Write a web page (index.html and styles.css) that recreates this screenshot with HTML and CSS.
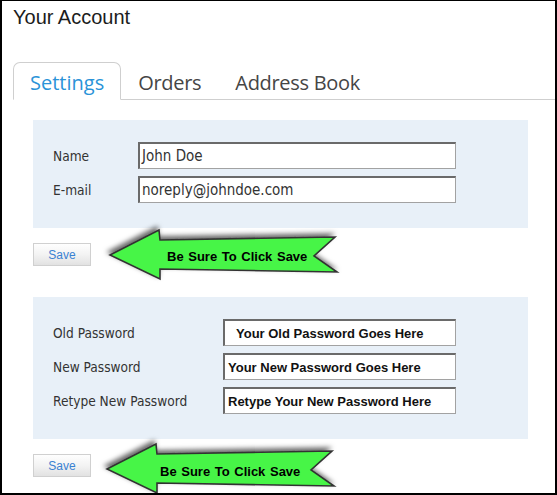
FILE: index.html
```html
<!DOCTYPE html>
<html lang="en">
<head>
<meta charset="utf-8">
<title>Your Account</title>
<link rel="stylesheet" href="styles.css">
</head>
<body>
<div class="frame">
  <h1 class="title">Your Account</h1>
  <div class="tabs">
    <div class="tab active">Settings</div>
    <div class="tab">Orders</div>
    <div class="tab">Address Book</div>
  </div>

  <div class="panel panel-info">
    <div class="label">Name</div>
    <div class="field">John Doe</div>
    <div class="label">E-mail</div>
    <div class="field">noreply@johndoe.com</div>
  </div>
  <div class="save-row">
    <button class="btn">Save</button>
    <svg class="callout" viewBox="100 224 245 60" width="245" height="60">
      <defs>
        <filter id="sh1" x="-10%" y="-40%" width="125%" height="180%">
          <feDropShadow dx="-2" dy="-3" stdDeviation="2.5" flood-color="#000" flood-opacity="0.6"/>
        </filter>
      </defs>
      <polygon points="110,255 159,230 160,240 335,237 314,256 337,272 160,269 160,279" fill="#46f546" stroke="#333" stroke-width="1.6" stroke-linejoin="miter" filter="url(#sh1)"/>
      <text x="167" y="261" class="callout-text">Be Sure To Click Save</text>
    </svg>
  </div>

  <div class="panel panel-pass">
    <div class="label">Old Password</div>
    <div class="field bold indent">Your Old Password Goes Here</div>
    <div class="label">New Password</div>
    <div class="field bold">Your New Password Goes Here</div>
    <div class="label">Retype New Password</div>
    <div class="field bold">Retype Your New Password Here</div>
  </div>
  <div class="save-row">
    <button class="btn">Save</button>
    <svg class="callout callout-2" viewBox="100 224 245 60" width="245" height="60">
      <defs>
        <filter id="sh2" x="-10%" y="-40%" width="125%" height="180%">
          <feDropShadow dx="-2" dy="-3" stdDeviation="2.5" flood-color="#000" flood-opacity="0.6"/>
        </filter>
      </defs>
      <polygon points="110,255 159,230 160,240 335,237 314,256 337,272 160,269 160,279" fill="#46f546" stroke="#333" stroke-width="1.6" stroke-linejoin="miter" filter="url(#sh2)"/>
      <text x="163" y="262" class="callout-text">Be Sure To Click Save</text>
    </svg>
  </div>
</div>
</body>
</html>
```
FILE: styles.css
```css
html, body {
  margin: 0;
  padding: 0;
  background: #fff;
}

.frame {
  width: 557px;
  height: 495px;
  box-sizing: border-box;
  border: 2px solid #000;
  border-top-width: 1px;
  overflow: hidden;
  background: #fff;
}

.title {
  margin: 0 0 0 11px;
  padding-top: 4px;
  font-family: "Liberation Sans", Arial, sans-serif;
  font-weight: normal;
  font-size: 20px;
  line-height: 24px;
  color: #1c1c1c;
}

.tabs {
  display: flex;
  align-items: flex-end;
  margin: 33px 0 0 11px;
  border-bottom: 1px solid #cfcfcf;
}

.tab {
  padding: 6px 16px 3px;
  font-family: "Open Sans", "Noto Sans", sans-serif;
  font-size: 20px;
  line-height: 27px;
  color: #454545;
  letter-spacing: -0.3px;
  border: 1px solid transparent;
  border-radius: 7px 7px 0 0;
  margin-bottom: -1px;
}

.tab.active {
  color: #2a93d8;
  letter-spacing: 0;
  border-color: #cfcfcf;
  border-bottom-color: #fff;
  background: #fff;
}

.panel {
  display: grid;
  align-items: center;
  row-gap: 7px;
  width: 495px;
  box-sizing: border-box;
  margin-left: 31px;
  padding: 22px 0 25px 20px;
  background: #e8f0f8;
}

.panel-info {
  margin-top: 20px;
  grid-template-columns: 85px 318px;
}

.panel-pass {
  margin-top: 31px;
  grid-template-columns: 170px 233px;
}

.label {
  font-family: "DejaVu Sans Condensed", "DejaVu Sans", sans-serif;
  font-size: 13.6px;
  color: #333;
}

.field {
  height: 27px;
  box-sizing: border-box;
  border-top: 2px solid #6a6a6a;
  border-left: 2px solid #6a6a6a;
  border-right: 1px solid #a2a2a2;
  border-bottom: 1px solid #a2a2a2;
  background: #fff;
  padding: 1px 0 0 2px;
  font-family: "DejaVu Sans Condensed", "DejaVu Sans", sans-serif;
  font-size: 15px;
  line-height: 23px;
  color: #333;
  white-space: nowrap;
  overflow: hidden;
}

.field.bold {
  font-family: "Liberation Sans", Arial, sans-serif;
  font-weight: bold;
  font-size: 13px;
  line-height: 22px;
  color: #111;
  padding: 2px 0 0 3px;
}

.field.indent {
  padding-left: 11px;
}

.save-row {
  position: relative;
  display: flex;
  margin: 15px 0 0 31px;
}

.btn {
  width: 58px;
  height: 23px;
  padding: 0;
  border: 1px solid #d0d0d0;
  background: linear-gradient(#fefefe, #f3f3f3 50%, #e2e2e2);
  font-family: "Liberation Sans", Arial, sans-serif;
  font-size: 12px;
  color: #3a82d2;
}

.callout {
  position: absolute;
  left: 67px;
  top: -19px;
  overflow: visible;
}

.callout-2 {
  left: 64px;
  top: -16px;
}

.callout-text {
  font-family: "Liberation Sans", Arial, sans-serif;
  font-weight: bold;
  font-size: 13px;
  fill: #000;
  word-spacing: 1px;
}
```
